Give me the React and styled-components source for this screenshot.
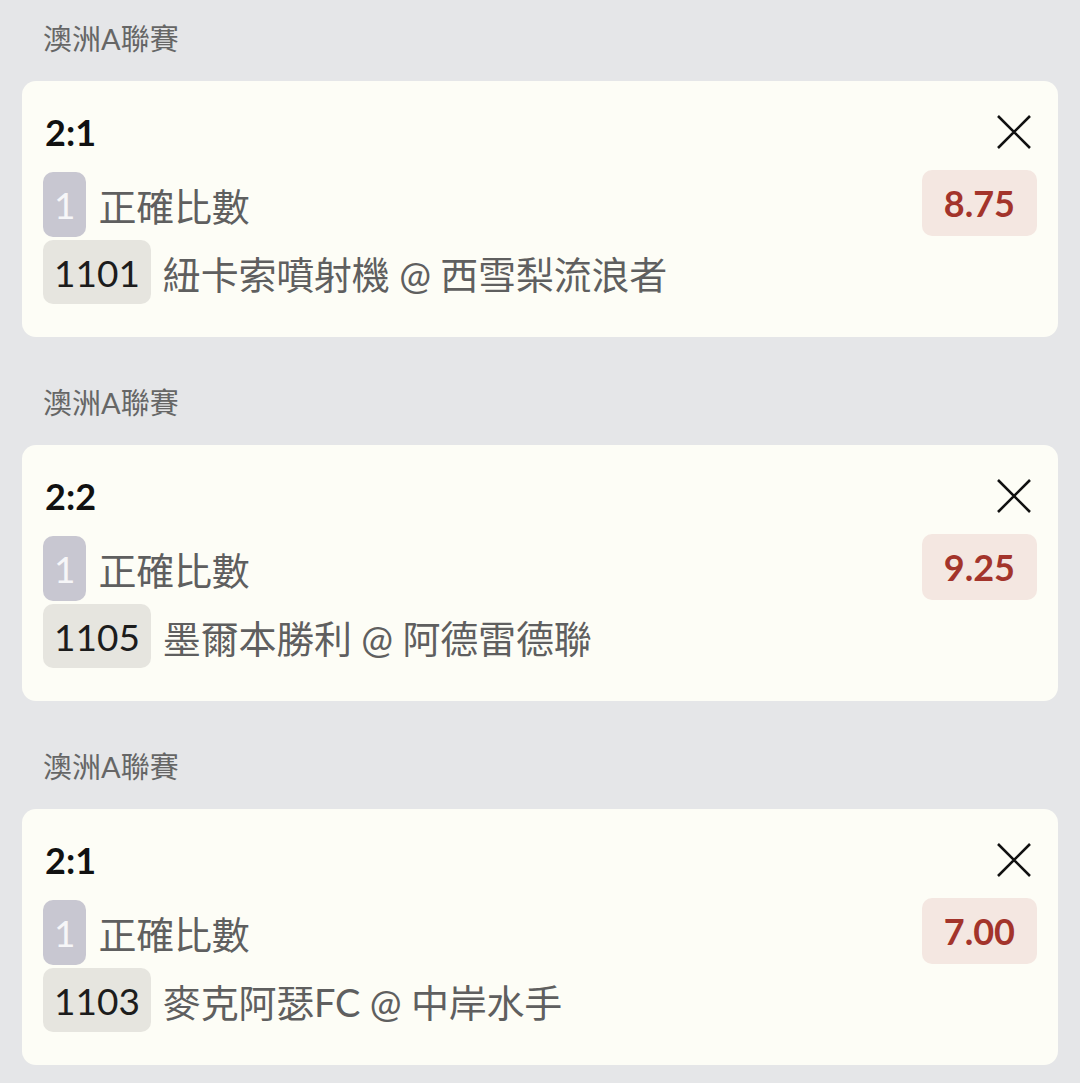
import React from "react";
import styled, { createGlobalStyle } from "styled-components";

const GlobalStyle = createGlobalStyle`
  html, body {
    margin: 0;
    padding: 0;
    background: #e5e6e8;
  }
  body {
    font-family: Lato, "Noto Sans CJK TC", sans-serif;
  }
`;

const Page = styled.div`
  display: flex;
  flex-direction: column;
  gap: 46px;
  padding: 19px 22px 20px 22px;
  background: #e5e6e8;
`;

const Section = styled.section`
  display: flex;
  flex-direction: column;
  gap: 22px;
`;

const League = styled.div`
  height: 40px;
  line-height: 40px;
  padding-left: 21px;
  font-size: 29px;
  color: #666;
`;

const Card = styled.div`
  background: #fdfdf6;
  border-radius: 14px;
  padding: 28px 21px 33px 21px;
  display: flex;
  flex-direction: column;
`;

const Header = styled.div`
  height: 46px;
  display: flex;
  align-items: center;
  justify-content: space-between;
  margin-bottom: 17px;
`;

const Score = styled.div`
  font-size: 36px;
  font-weight: 700;
  color: #111;
  padding-left: 2px;
`;

const CloseButton = styled.button`
  border: 0;
  background: none;
  padding: 0;
  margin-right: 6px;
  width: 34px;
  height: 34px;
  display: flex;
  cursor: pointer;
`;

const Row = styled.div`
  display: flex;
  align-items: center;
  gap: 12px;
  height: ${(p) => p.$h}px;
  margin-top: ${(p) => p.$mt || 0}px;
`;

const Tag = styled.span`
  align-self: stretch;
  display: flex;
  align-items: center;
  justify-content: center;
  padding: 0 11px;
  border-radius: 10px;
  font-size: 37px;
  background: ${(p) => (p.$muted ? "#c8c7d1" : "#e6e5df")};
  color: ${(p) => (p.$muted ? "#f6f6f8" : "#1c1c1c")};
`;

const Text = styled.span`
  flex: 1;
  font-size: 38px;
  color: #5f5f5f;
  white-space: nowrap;
  letter-spacing: -0.2px;
`;

const Odds = styled.span`
  height: 66px;
  margin-top: -3px;
  display: flex;
  align-items: center;
  padding: 0 22px;
  border-radius: 10px;
  background: #f4e7e1;
  color: #a3342b;
  font-size: 36px;
  font-weight: 700;
`;

const CloseIcon = () => (
  <svg width="34" height="34" viewBox="0 0 34 34">
    <path d="M1 1 L33 33 M33 1 L1 33" stroke="#111" strokeWidth="2.6" fill="none" />
  </svg>
);

const bets = [
  { league: "澳洲A聯賽", score: "2:1", odds: "8.75", no: "1101", match: "紐卡索噴射機 @ 西雪梨流浪者" },
  { league: "澳洲A聯賽", score: "2:2", odds: "9.25", no: "1105", match: "墨爾本勝利 @ 阿德雷德聯" },
  { league: "澳洲A聯賽", score: "2:1", odds: "7.00", no: "1103", match: "麥克阿瑟FC @ 中岸水手" },
];

export default function App() {
  return (
    <>
      <GlobalStyle />
      <Page>
        {bets.map((b, i) => (
          <Section key={i}>
            <League>{b.league}</League>
            <Card>
              <Header>
                <Score>{b.score}</Score>
                <CloseButton aria-label="remove">
                  <CloseIcon />
                </CloseButton>
              </Header>
              <Row $h={65}>
                <Tag $muted>1</Tag>
                <Text>正確比數</Text>
                <Odds>{b.odds}</Odds>
              </Row>
              <Row $h={64} $mt={3}>
                <Tag>{b.no}</Tag>
                <Text>{b.match}</Text>
              </Row>
            </Card>
          </Section>
        ))}
      </Page>
    </>
  );
}
